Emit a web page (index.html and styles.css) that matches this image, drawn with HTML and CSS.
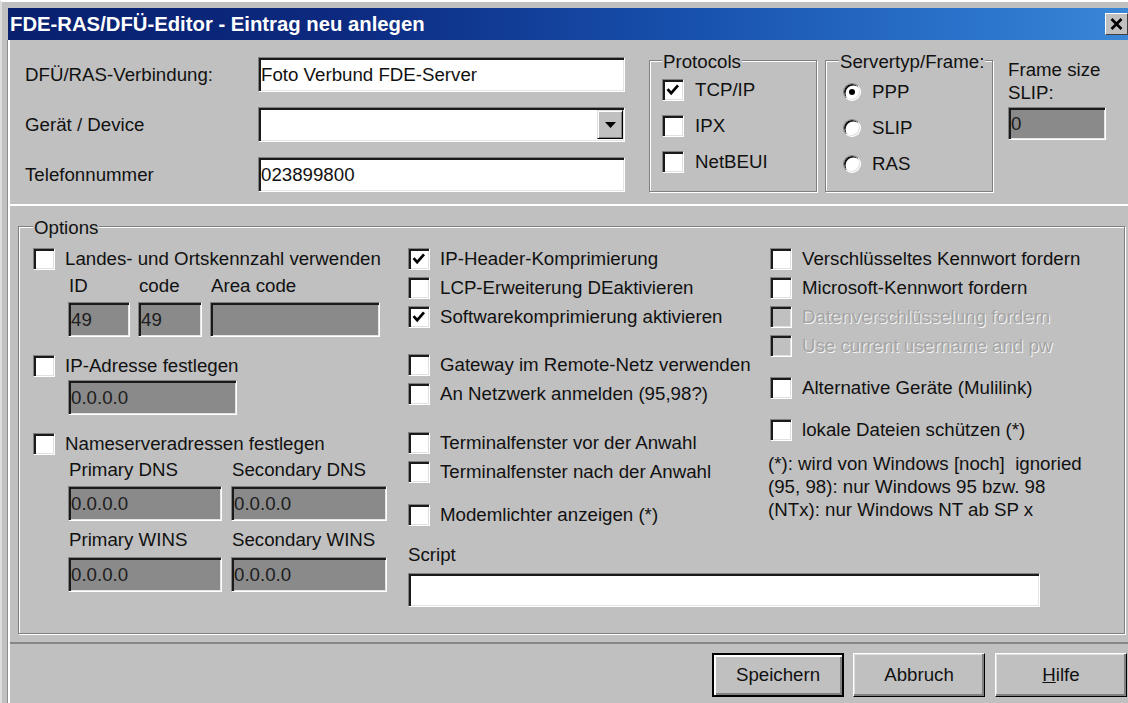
FILE: index.html
```html
<!DOCTYPE html>
<html lang="de">
<head>
<meta charset="utf-8">
<title>FDE-RAS/DFÜ-Editor</title>
<link rel="stylesheet" href="styles.css">
</head>
<body>
<div class="window">
  <div class="titlebar">
    <span class="title">FDE-RAS/DFÜ-Editor - Eintrag neu anlegen</span>
    <span class="close"><svg width="13" height="12" viewBox="0 0 13 12"><path d="M1.5 1 L11.5 11 M11.5 1 L1.5 11" stroke="#000" stroke-width="2.6" fill="none"/></svg></span>
  </div>
  <div class="client">
    <div class="top">
      <div class="form">
        <span class="lbl">DFÜ/RAS-Verbindung:</span>
        <div class="field">Foto Verbund FDE-Server</div>
        <span class="lbl">Gerät / Device</span>
        <div class="field combo"><span class="drop"><svg width="11" height="6" viewBox="0 0 11 6"><path d="M0 0 H11 L5.5 6 Z" fill="#000"/></svg></span></div>
        <span class="lbl">Telefonnummer</span>
        <div class="field">023899800</div>
      </div>

      <fieldset class="group proto">
        <legend>Protocols</legend>
        <div class="opt tall"><span class="cb"><svg viewBox="0 0 22 22"><path d="M5 10 L9 14.5 L16.5 6" stroke="#000" stroke-width="3" fill="none"/></svg></span>TCP/IP</div>
        <div class="opt tall"><span class="cb"></span>IPX</div>
        <div class="opt tall"><span class="cb"></span>NetBEUI</div>
      </fieldset>

      <fieldset class="group server">
        <legend>Servertyp/Frame:</legend>
        <div class="opt tall"><span class="rb on"></span>PPP</div>
        <div class="opt tall"><span class="rb"></span>SLIP</div>
        <div class="opt tall"><span class="rb"></span>RAS</div>
      </fieldset>

      <div class="framesize">
        <div class="fs-text">Frame size<br>SLIP:</div>
        <div class="field off fs-field">0</div>
      </div>
    </div>

    <div class="panel">
      <fieldset class="group options">
        <legend>Options</legend>
        <div class="opts">
          <div class="col c1">
            <div class="opt"><span class="cb"></span>Landes- und Ortskennzahl verwenden</div>
            <div class="sub area">
              <span class="sl">ID</span><span class="sl">code</span><span class="sl">Area code</span>
              <div class="field off">49</div><div class="field off">49</div><div class="field off"></div>
            </div>
            <div class="opt gap14"><span class="cb"></span>IP-Adresse festlegen</div>
            <div class="field off ip">0.0.0.0</div>
            <div class="opt gap14"><span class="cb"></span>Nameserveradressen festlegen</div>
            <div class="sub dns">
              <span class="sl">Primary DNS</span><span class="sl">Secondary DNS</span>
              <div class="field off">0.0.0.0</div><div class="field off">0.0.0.0</div>
            </div>
            <div class="sub dns wins">
              <span class="sl">Primary WINS</span><span class="sl">Secondary WINS</span>
              <div class="field off">0.0.0.0</div><div class="field off">0.0.0.0</div>
            </div>
          </div>

          <div class="col c2">
            <div class="opt"><span class="cb"><svg viewBox="0 0 22 22"><path d="M5 10 L9 14.5 L16.5 6" stroke="#000" stroke-width="3" fill="none"/></svg></span>IP-Header-Komprimierung</div>
            <div class="opt"><span class="cb"></span>LCP-Erweiterung DEaktivieren</div>
            <div class="opt"><span class="cb"><svg viewBox="0 0 22 22"><path d="M5 10 L9 14.5 L16.5 6" stroke="#000" stroke-width="3" fill="none"/></svg></span>Softwarekomprimierung aktivieren</div>
            <div class="opt gap19"><span class="cb"></span>Gateway im Remote-Netz verwenden</div>
            <div class="opt"><span class="cb"></span>An Netzwerk anmelden (95,98?)</div>
            <div class="opt gap20"><span class="cb"></span>Terminalfenster vor der Anwahl</div>
            <div class="opt"><span class="cb"></span>Terminalfenster nach der Anwahl</div>
            <div class="opt gap14"><span class="cb"></span>Modemlichter anzeigen (*)</div>
            <div class="script-lbl">Script</div>
            <div class="field script"></div>
          </div>

          <div class="col c3">
            <div class="opt"><span class="cb"></span>Verschlüsseltes Kennwort fordern</div>
            <div class="opt"><span class="cb"></span>Microsoft-Kennwort fordern</div>
            <div class="opt disabled"><span class="cb off"></span>Datenverschlüsselung fordern</div>
            <div class="opt disabled"><span class="cb off"></span>Use current username and pw</div>
            <div class="opt gap13"><span class="cb"></span>Alternative Geräte (Mulilink)</div>
            <div class="opt gap13"><span class="cb"></span>lokale Dateien schützen (*)</div>
            <div class="notes">(*): wird von Windows [noch]&nbsp; ignoried<br>(95, 98): nur Windows 95 bzw. 98<br>(NTx): nur Windows NT ab SP x</div>
          </div>
        </div>
      </fieldset>
    </div>

    <div class="buttons">
      <div class="btn default">Speichern</div>
      <div class="btn b2">Abbruch</div>
      <div class="btn b3"><span><u>H</u>ilfe</span></div>
    </div>
  </div>
</div>
</body>
</html>
```

FILE: styles.css
```css
* { box-sizing: border-box; }

html, body { margin: 0; padding: 0; }

body {
  width: 1128px;
  height: 703px;
  overflow: hidden;
  background: #c0c0c0;
  font-family: "Liberation Sans", Arial, sans-serif;
  font-size: 18.7px;
  color: #111;
}

/* dialog frame */
.window {
  height: 703px;
  border-top: 2px solid #fff;
  border-left: 2px solid #dcdcdc;
  padding: 6px 0 0 6px;
  display: flex;
  flex-direction: column;
}

.titlebar {
  flex: none;
  height: 32px;
  display: flex;
  align-items: center;
  justify-content: space-between;
  padding-left: 2px;
  background: linear-gradient(to right, #08206e 0%, #0c2a80 30%, #1750ad 60%, #2a72cb 85%, #3a86d6 100%);
  color: #fff;
  font-weight: bold;
  font-size: 20.3px;
  white-space: nowrap;
}

.close {
  width: 23px;
  height: 22px;
  background: #c0c0c0;
  border: 1px solid;
  border-color: #fff #404040 #404040 #fff;
  display: flex;
  align-items: center;
  justify-content: center;
}

.client {
  flex: 1;
  display: flex;
  flex-direction: column;
  border-left: 2px solid #fff;
  box-shadow: -1px 0 0 #8c8c8c;
}

/* upper area: connection fields and group boxes */
.top {
  flex: none;
  height: 164px;
  display: flex;
  align-items: flex-start;
}

.form {
  margin: 17px 0 0 15px;
  display: grid;
  grid-template-columns: 233px 367px;
  grid-auto-rows: 35px;
  row-gap: 15px;
}

.lbl {
  align-self: center;
  white-space: nowrap;
}

/* sunken edit field */
.field {
  height: 35px;
  background: #fff;
  border: 1px solid;
  border-color: #808080 #fff #fff #808080;
  box-shadow: inset 2px 2px 0 #1a1a1a, inset -1px -1px 0 #e4e4e4;
  padding: 0 3px 0 2px;
  display: flex;
  align-items: center;
  white-space: nowrap;
}

.field.off {
  background: #8a8a8a;
  color: #1c1c1c;
}

.combo {
  justify-content: flex-end;
  align-items: stretch;
  padding: 2px 1px 2px 2px;
}

.drop {
  width: 26px;
  background: #c0c0c0;
  border: 1px solid;
  border-color: #dfdfdf #000 #000 #dfdfdf;
  box-shadow: inset 1px 1px 0 #fff, inset -1px -1px 0 #808080;
  display: flex;
  align-items: center;
  justify-content: center;
}

/* etched group box */
.group {
  margin: 0;
  padding: 0;
  border: 1px solid #808080;
  box-shadow: inset 1px 1px 0 #fff, 1px 1px 0 #fff;
  min-width: 0;
}

.group legend {
  padding: 4px 1px 0;
  line-height: 20px;
  background: #c0c0c0;
  white-space: nowrap;
}

.proto {
  width: 168px;
  margin: 8px 0 0 24px;
  padding: 0 0 11px 12px;
}

.server {
  width: 168px;
  margin: 8px 0 0 8px;
  padding: 2px 0 9px 17px;
}

.server legend { margin-left: -4px; }

.framesize {
  margin: 18px 0 0 15px;
}

.fs-text {
  line-height: 23px;
}

.fs-field {
  width: 98px;
  height: 33px;
  margin-top: 3px;
}

/* option rows */
.opt {
  height: 29px;
  display: flex;
  align-items: center;
  white-space: nowrap;
}

.opt.tall { height: 36px; }

.cb {
  flex: none;
  width: 22px;
  height: 22px;
  margin-right: 10px;
  background: #fff;
  border: 1px solid;
  border-color: #808080 #fff #fff #808080;
  box-shadow: inset 2px 2px 0 #1a1a1a, inset -1px -1px 0 #e0e0e0;
  display: flex;
}

.cb svg { width: 100%; height: 100%; }

.proto .cb { margin-right: 11px; }

.cb.off { background: #c0c0c0; }

.rb {
  flex: none;
  width: 18px;
  height: 18px;
  margin-right: 11px;
  border-radius: 50%;
  border: 1px solid;
  border-color: #808080 #fff #fff #808080;
  box-shadow: inset 1.5px 1.5px 0 #111, inset -1px -1px 0 #dfdfdf;
  background: #fff;
  display: flex;
  align-items: center;
  justify-content: center;
}

.rb.on::after {
  content: "";
  width: 6px;
  height: 6px;
  border-radius: 50%;
  background: #000;
}

.disabled {
  color: #a4a4a4;
  text-shadow: 1px 1px 0 #f6f6f6;
}

/* options panel */
.panel {
  flex: none;
  height: 440px;
  border-top: 2px solid #fff;
  border-bottom: 2px solid #868686;
}

.options {
  width: 1107px;
  height: 420px;
  margin: 8px 0 0 8px;
  padding: 0 0 0 14px;
}

.opts {
  padding-top: 6px;
  display: grid;
  grid-template-columns: 375px 362px 1fr;
}

.col {
  display: flex;
  flex-direction: column;
  align-items: flex-start;
}

.gap13 { margin-top: 13px; }
.gap14 { margin-top: 14px; }
.gap19 { margin-top: 19px; }
.gap20 { margin-top: 20px; }

.sub {
  margin-left: 35px;
  display: grid;
  row-gap: 5px;
}

.sl {
  line-height: 22px;
  padding-left: 1px;
  white-space: nowrap;
}

.area {
  margin-top: 2px;
  grid-template-columns: 62px 64px 170px;
  column-gap: 8px;
}

.ip {
  width: 169px;
  margin-left: 35px;
}

.dns {
  margin-top: 1px;
  grid-template-columns: 154px 156px;
  column-gap: 9px;
}

.dns.wins {
  margin-top: 8px;
  row-gap: 6px;
}

.script-lbl {
  margin-top: 15px;
  line-height: 22px;
}

.script {
  width: 632px;
  height: 34px;
  margin-top: 7px;
}

.notes {
  margin: 8px 0 0 -2px;
  line-height: 23px;
  white-space: nowrap;
}

/* command buttons */
.buttons {
  flex: 1;
  display: flex;
  justify-content: flex-end;
  align-items: flex-start;
  padding: 9px 1px 0 0;
}

.btn {
  width: 132px;
  height: 44px;
  background: #c0c0c0;
  border: 1px solid;
  border-color: #fff #000 #000 #fff;
  box-shadow: inset -2px -2px 0 #808080, inset 1px 1px 0 #dfdfdf;
  display: flex;
  align-items: center;
  justify-content: center;
}

.btn.default {
  border: 2px solid #000;
  box-shadow: inset 2px 2px 0 #fff, inset -2px -2px 0 #808080;
}

.b2 { margin-left: 9px; }
.b3 { margin-left: 10px; }
```
